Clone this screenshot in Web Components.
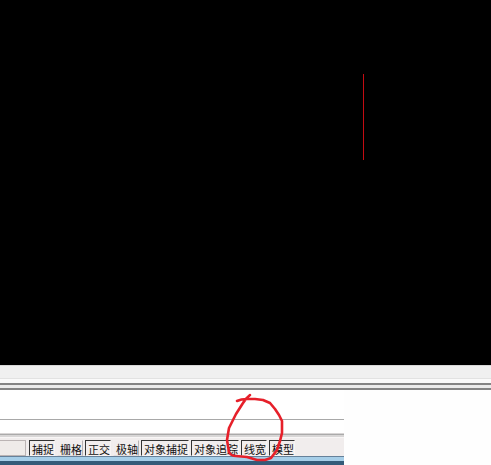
<!DOCTYPE html>
<html lang="zh-CN">
<head>
<meta charset="utf-8">
<title>CAD</title>
<style>
html,body{margin:0;height:100%}
body{background:#fefefe;overflow:hidden}
</style>
</head>
<body>
<cad-window></cad-window>
<script>
const define = (name, html) => customElements.define(name, class extends HTMLElement {
  constructor() {
    super();
    this.attachShadow({mode: 'open'}).innerHTML = html;
  }
});

define('cad-canvas', `<style>
:host{display:block;flex:1;min-height:0;background:#000;position:relative}
i{position:absolute;left:74%;top:74px;width:1px;height:86px;background:#c40c12}
</style><i></i>`);

define('cad-splitter', `<style>
:host{display:block}
.bar{height:12px;background:#f0f0f0;border-top:1px solid #d8d8d8}
.gap{height:4px;background:#fafafa;border-top:1px solid #e2e2e2}
.line{height:3px;background:#ececec;border-top:2px solid #858585;border-bottom:2px solid #858585}
</style><div class="bar"></div><div class="gap"></div><div class="line"></div>`);

define('cad-command', `<style>
:host{display:block;background:#fff}
.history{height:29px;border-bottom:1px solid #a8a8a8}
.input{display:block;box-sizing:border-box;width:100%;height:13px;border:0;padding:0;background:#fff;outline:0;font:10px "Liberation Sans","Noto Sans CJK SC",sans-serif}
</style><div class="history"></div><input class="input" aria-label="命令">`);

class CadToggle extends HTMLElement {
  connectedCallback() {
    const on = this.hasAttribute('on');
    this.attachShadow({mode: 'open'}).innerHTML = `<style>
:host{display:block}
button{display:flex;box-sizing:border-box;height:16px;margin:0;padding:0 0 0 2px;border:1px solid;border-color:#f3eeee #b8b2b2 #e4dede #f3eeee;background:#f1eded;color:#111;font:11px/16px "Noto Sans CJK SC",sans-serif;white-space:nowrap;align-items:flex-start}
button[aria-pressed=true]{border-color:#333 #f8f4f4 #f8f4f4 #333}
</style><button type="button" aria-pressed="${on}"><slot></slot></button>`;
  }
}
customElements.define('cad-toggle', CadToggle);

define('cad-status', `<style>
:host{display:block;background:#f1eded;border-top:1px solid #d8d5d5}
.edge{height:2px;background:#d8d6d6;border-top:1px solid #aaa;border-bottom:1px solid #f8f6f6}
.row{display:flex;gap:2px;padding-top:2px}
.coords{box-sizing:border-box;width:26px;height:16px;margin-right:1px;border:1px solid #bbb4b4;border-left:0;background:#efebe9}
</style><div class="edge"></div><div class="row"><div class="coords"></div><slot></slot></div>`);

define('cad-taskbar', `<style>
:host{display:block;height:4px;background:#a6cee8;border-top:1px solid #66819a;border-bottom:4px solid #345b79}
</style>`);

define('cad-mark', `<style>
:host{display:block;position:absolute;left:224px;bottom:0;width:62px;height:73px;pointer-events:none}
svg{display:block}
</style><svg width="62" height="73" viewBox="224 392 62 73" fill="none" stroke="#e6202a" stroke-width="2.6" stroke-linecap="round" stroke-linejoin="round" aria-hidden="true"><path d="M250 395Q246 398 243 403L236 414L229 428L227 440L229 452Q231 456 236 456L247 457L257 460H265L271 458L277 450L280 441L282 433V421L279 415L275 409L270 403L263 400L255 399H247Q241 399 237 401"/></svg>`);

define('cad-window', `<style>
:host{display:flex;flex-direction:column;height:100vh;position:relative}
.lower{width:70%}
</style>
<cad-canvas></cad-canvas>
<cad-splitter></cad-splitter>
<div class="lower">
<cad-command></cad-command>
<cad-status>
<cad-toggle on>捕捉</cad-toggle><cad-toggle>栅格</cad-toggle><cad-toggle on>正交</cad-toggle><cad-toggle>极轴</cad-toggle><cad-toggle on>对象捕捉</cad-toggle><cad-toggle on>对象追踪</cad-toggle><cad-toggle on>线宽</cad-toggle><cad-toggle on>模型</cad-toggle>
</cad-status>
<cad-taskbar></cad-taskbar>
</div>
<cad-mark></cad-mark>`);
</script>
</body>
</html>
